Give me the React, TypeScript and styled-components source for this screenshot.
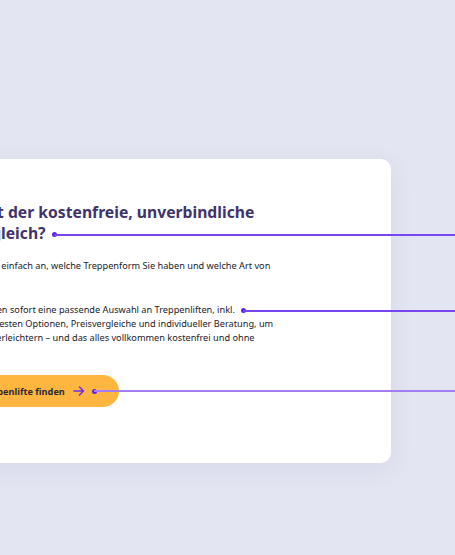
import React from "react";
import styled, { createGlobalStyle } from "styled-components";

const GlobalStyle = createGlobalStyle`
  html, body {
    margin: 0;
    padding: 0;
    background: #e4e5f2;
    overflow: hidden;
  }
  * { box-sizing: border-box; }
`;

export default function App() {
  return (
    <Page>
      <GlobalStyle />
      <Card>
        <Heading>
          Wie funktioniert der kostenfreie, unverbindliche
          <br />
          Treppenlift Vergleich?
          <Marker />
        </Heading>
        <Text>
          Im ersten Schritt kreuzen Sie einfach an, welche Treppenform Sie haben und welche Art von
          <br />
          Treppenlift Sie suchen.
        </Text>
        <Text>
          Anschließend zeigen wir Ihnen sofort eine passende Auswahl an Treppenliften, inkl.
          <Marker />
          <br />
          Kostenübersicht sowie den besten Optionen, Preisvergleiche und individueller Beratung, um
          <br />
          Ihnen Ihre Entscheidung zu erleichtern – und das alles vollkommen kostenfrei und ohne
          <br />
          Verpflichtung.
        </Text>
        <Button>
          Jetzt passende Treppenlifte finden
          <ArrowIcon />
          <ButtonMarker $tone="#a47cf3" />
        </Button>
      </Card>
    </Page>
  );
}

const ArrowIcon = () => (
  <Arrow viewBox="0 0 12 10" width="12" height="10">
    <path d="M1 5h9.5M6.5 1l4 4-4 4" fill="none" stroke="#6a2cf0" strokeWidth="1.5" strokeLinecap="round" strokeLinejoin="round" />
  </Arrow>
);

const Page = styled.div`
  width: 455px;
  height: 555px;
  padding-top: 159px;
  overflow: hidden;
  font-family: "Noto Sans", "Liberation Sans", sans-serif;
`;

const Card = styled.div`
  width: 564px;
  height: 304px;
  margin-left: -173px;
  padding: 43px 40px 0 48px;
  background: #ffffff;
  border-radius: 10px;
  box-shadow: 0 6px 24px rgba(70, 70, 130, 0.08);
  display: flex;
  flex-direction: column;
  align-items: flex-start;
`;

const Heading = styled.h2`
  margin: 0 0 15px;
  font-size: 15.7px;
  line-height: 21px;
  font-weight: 700;
  color: #41346b;
  white-space: nowrap;
`;

const Text = styled.p`
  margin: 0 0 16px;
  font-size: 9.2px;
  line-height: 14px;
  color: #222129;
  white-space: nowrap;
`;

const Marker = styled.span<{ $tone?: string }>`
  position: relative;
  display: inline-block;
  width: 5px;
  height: 5px;
  margin-left: 6px;
  border-radius: 50%;
  background: #5b22f2;
  vertical-align: middle;

  &::after {
    content: "";
    position: absolute;
    left: 2px;
    top: 1.5px;
    width: 700px;
    height: 2px;
    background: ${(p) => p.$tone || "#7845f0"};
  }
`;

const Button = styled.button`
  position: relative;
  display: flex;
  align-items: center;
  gap: 8px;
  height: 32px;
  padding: 0 34px 0 33px;
  border: none;
  border-radius: 16px;
  background: #ffb641;
  font-family: "Noto Sans", "Liberation Sans", sans-serif;
  font-size: 9.2px;
  font-weight: 700;
  color: #2c2836;
`;

const Arrow = styled.svg`
  display: block;
`;

const ButtonMarker = styled(Marker)`
  position: absolute;
  right: 21.5px;
  top: 50%;
  margin: -2.5px 0 0;
`;
